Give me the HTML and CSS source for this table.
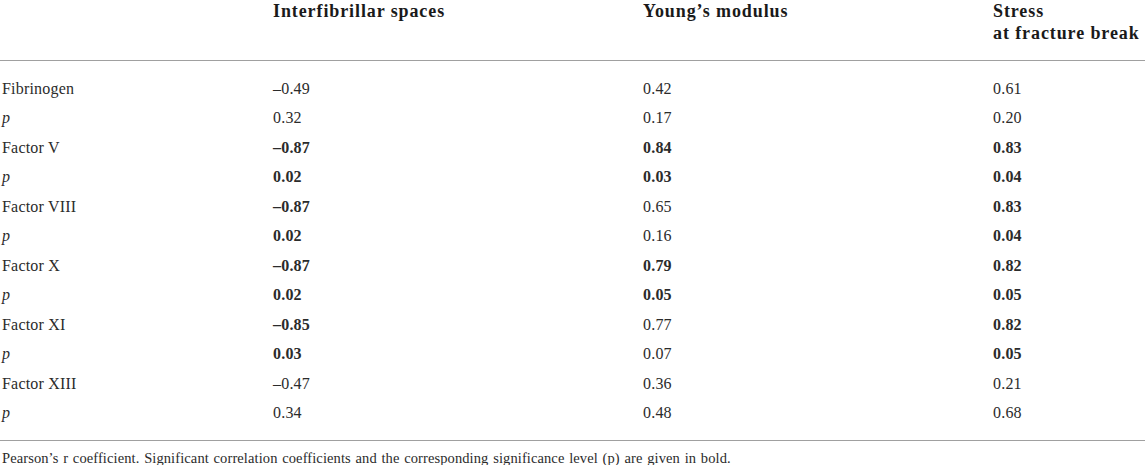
FILE: index.html
```html
<!DOCTYPE html>
<html lang="en">
<head>
    <meta charset="UTF-8">
    <title>Correlation table</title>
    <link rel="stylesheet" href="styles.css">
</head>
<body>
    <div class="table-wrap">
        <table class="data-table">
            <thead>
                <tr>
                    <th class="label-col"></th>
                    <th class="col-1">Interfibrillar spaces</th>
                    <th class="col-2">Young’s modulus</th>
                    <th class="col-3">Stress<br>at fracture break</th>
                </tr>
            </thead>
            <tbody>
                <tr><td>Fibrinogen</td><td>–0.49</td><td>0.42</td><td>0.61</td></tr>
                <tr><td><i>p</i></td><td>0.32</td><td>0.17</td><td>0.20</td></tr>
                <tr><td>Factor V</td><td><b>–0.87</b></td><td><b>0.84</b></td><td><b>0.83</b></td></tr>
                <tr><td><i>p</i></td><td><b>0.02</b></td><td><b>0.03</b></td><td><b>0.04</b></td></tr>
                <tr><td>Factor VIII</td><td><b>–0.87</b></td><td>0.65</td><td><b>0.83</b></td></tr>
                <tr><td><i>p</i></td><td><b>0.02</b></td><td>0.16</td><td><b>0.04</b></td></tr>
                <tr><td>Factor X</td><td><b>–0.87</b></td><td><b>0.79</b></td><td><b>0.82</b></td></tr>
                <tr><td><i>p</i></td><td><b>0.02</b></td><td><b>0.05</b></td><td><b>0.05</b></td></tr>
                <tr><td>Factor XI</td><td><b>–0.85</b></td><td>0.77</td><td><b>0.82</b></td></tr>
                <tr><td><i>p</i></td><td><b>0.03</b></td><td>0.07</td><td><b>0.05</b></td></tr>
                <tr><td>Factor XIII</td><td>–0.47</td><td>0.36</td><td>0.21</td></tr>
                <tr><td><i>p</i></td><td>0.34</td><td>0.48</td><td>0.68</td></tr>
            </tbody>
        </table>
        <p class="table-note">Pearson’s r coefficient. Significant correlation coefficients and the corresponding significance level (p) are given in bold.</p>
    </div>
</body>
</html>
```

FILE: styles.css
```css
body {
    margin: 0;
    background: #fff;
    font-family: "Liberation Serif", "Times New Roman", serif;
    color: #2b2b2b;
}

.table-wrap {
    width: 1145px;
}

.data-table {
    width: 100%;
    border-collapse: collapse;
    table-layout: fixed;
}

.data-table th {
    text-align: left;
    vertical-align: top;
    font-size: 18px;
    font-weight: bold;
    letter-spacing: 0.9px;
    line-height: 22px;
    color: #1a1a1a;
    padding: 0 0 16px 0;
    height: 44px;
    border-bottom: 1px solid #a0a0a0;
}

.label-col {
    width: 273px;
}

.col-1 {
    width: 370px;
}

.col-2 {
    width: 350px;
}

.data-table td {
    font-size: 16px;
    letter-spacing: 0.2px;
    height: 29.5px;
    padding: 0;
    vertical-align: middle;
}

.data-table td:first-child {
    padding-left: 2px;
}

.data-table tbody tr:first-child td {
    padding-top: 13px;
}

.data-table tbody tr:last-child td {
    padding-bottom: 12px;
    border-bottom: 1px solid #a0a0a0;
}

.table-note {
    margin: 7px 0 0 2px;
    font-size: 14.5px;
    line-height: 20px;
    letter-spacing: 0.1px;
    word-spacing: 1px;
}
```
